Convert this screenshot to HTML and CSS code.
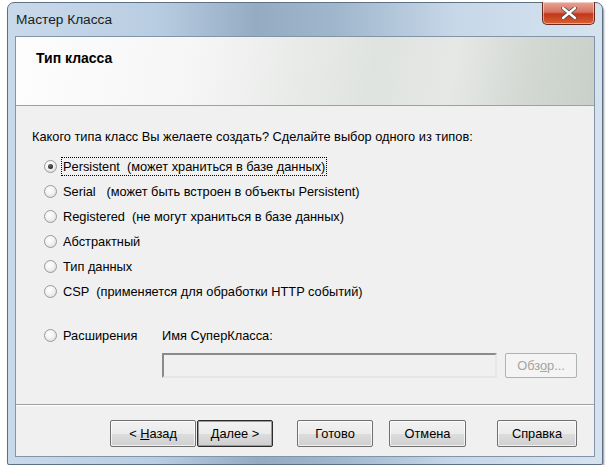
FILE: index.html
```html
<!DOCTYPE html>
<html lang="ru">
<head>
  <meta charset="UTF-8">
  <title>Мастер Класса</title>
  <link rel="stylesheet" href="styles.css">
</head>
<body>
  <div class="window">
    <div class="titlebar">
      <span class="caption">Мастер Класса</span>
      <button class="close" title="Закрыть">
        <svg width="16" height="12" viewBox="0 0 16 12">
          <path d="M2 1 L14 11 M14 1 L2 11" stroke="#4a4a4a" stroke-width="4" stroke-linecap="round"/>
          <path d="M2 1 L14 11 M14 1 L2 11" stroke="#ffffff" stroke-width="2.4" stroke-linecap="round"/>
        </svg>
      </button>
    </div>

    <div class="client">
      <div class="header">
        <h1>Тип класса</h1>
      </div>

      <div class="content">
        <p class="question">Какого типа класс Вы желаете создать? Сделайте выбор одного из типов:</p>

        <div class="options">
          <label class="option"><span class="radio checked"></span><span class="text focused">Persistent  (может храниться в базе данных)</span></label>
          <label class="option"><span class="radio"></span><span class="text">Serial   (может быть встроен в объекты Persistent)</span></label>
          <label class="option"><span class="radio"></span><span class="text">Registered  (не могут храниться в базе данных)</span></label>
          <label class="option"><span class="radio"></span><span class="text">Абстрактный</span></label>
          <label class="option"><span class="radio"></span><span class="text">Тип данных</span></label>
          <label class="option"><span class="radio"></span><span class="text">CSP  (применяется для обработки HTTP событий)</span></label>
        </div>

        <div class="extend">
          <label class="option"><span class="radio"></span><span class="text">Расширения</span></label>
          <span class="super-label">Имя СуперКласса:</span>
        </div>
        <div class="super-row">
          <input class="super-input" type="text" disabled>
          <button class="btn browse" disabled>Обз<u>о</u>р...</button>
        </div>
      </div>

      <div class="footer">
        <button class="btn back">&lt; <u>Н</u>азад</button>
        <button class="btn next default"><u>Д</u>алее &gt;</button>
        <button class="btn finish">Готово</button>
        <button class="btn cancel">Отмена</button>
        <button class="btn help">Справка</button>
      </div>
    </div>
  </div>
</body>
</html>
```

FILE: styles.css
```css
* {
  box-sizing: border-box;
}

body {
  margin: 0;
  background: #ffffff;
  font-family: "Liberation Sans", Arial, sans-serif;
  font-size: 12.8px;
  color: #000;
}

.window {
  width: 596px;
  height: 463px;
  margin: 2px 0 0 7px;
  padding: 0 7px 6px 7px;
  border: 1px solid #5d7086;
  border-radius: 7px 7px 2px 2px;
  background: linear-gradient(to right, #c8d9ea 0%, #b9cde2 25%, #94abc2 42%, #9fb6cc 55%, #c6d7e8 75%, #d6e3ef 100%);
  box-shadow: 1px 2px 2px rgba(0,0,0,0.45);
}

.titlebar {
  height: 33px;
  display: flex;
  justify-content: space-between;
  align-items: flex-start;
}

.caption {
  font-size: 13.7px;
  margin: 9px 0 0 1px;
  color: #1b1b1b;
}

.close {
  width: 53px;
  height: 23px;
  margin-top: -1px;
  padding: 0;
  border: 1px solid #6b2a20;
  border-top: none;
  border-radius: 0 0 5px 5px;
  background: linear-gradient(to bottom, #e8a597 0%, #d7735f 45%, #c2371d 55%, #d9612f 100%);
  box-shadow: inset 0 0 0 1px rgba(255,255,255,0.45);
  display: flex;
  align-items: center;
  justify-content: center;
}

.client {
  height: 421px;
  border: 1px solid #8194a8;
  background: #f0f0f0;
  display: flex;
  flex-direction: column;
}

.header {
  height: 69px;
  flex-shrink: 0;
  border-bottom: 1px solid #a0a0a0;
  background: linear-gradient(100deg, #fdfdfd 0%, #f6f6f6 30%, #e9ebe9 48%, #dfe3df 62%, #e6e8e6 75%, #d3d8d3 88%, #c9cfc9 100%);
}

h1 {
  margin: 13px 0 0 20px;
  font-size: 14px;
  font-weight: bold;
}

.content {
  flex: 1;
  padding: 23px 0 0 16px;
}

.question {
  margin: 0;
  line-height: 16px;
}

.options {
  margin-top: 9px;
}

.option {
  display: flex;
  align-items: center;
  height: 25px;
  padding-left: 12px;
}

.radio {
  position: relative;
  width: 13px;
  height: 13px;
  border: 1px solid #9a9a9a;
  border-radius: 50%;
  background: radial-gradient(circle at 40% 35%, #ffffff 0%, #f4f4f4 40%, #d6d6d6 100%);
  margin-right: 4px;
  flex-shrink: 0;
}

.radio.checked::after {
  content: "";
  position: absolute;
  left: 3px;
  top: 3px;
  width: 5px;
  height: 5px;
  border-radius: 50%;
  background: radial-gradient(circle at 40% 35%, #6a6a6a, #0d0d0d);
}

.text {
  white-space: pre;
  padding: 1px 1px;
  border: 1px dotted transparent;
  line-height: 15px;
}

.text.focused {
  border-color: #000;
}

.extend {
  display: flex;
  align-items: center;
  margin-top: 19px;
}

.extend .option {
  width: 130px;
}

.super-row {
  display: flex;
  gap: 8px;
  margin: 5px 0 0 130px;
}

.super-input {
  width: 335px;
  height: 25px;
  padding: 0;
  border: 2px solid;
  border-color: #8a8a8a #e6e6e6 #e6e6e6 #8a8a8a;
  background: #f0f0f0;
}

.btn {
  height: 27px;
  font-family: "Liberation Sans", Arial, sans-serif;
  font-size: 12.8px;
  color: #000;
  border: 1px solid #707070;
  border-radius: 2px;
  background: linear-gradient(to bottom, #f2f2f2 0%, #ebebeb 50%, #dddddd 51%, #cfcfcf 100%);
  box-shadow: inset 0 0 0 1px rgba(255,255,255,0.7);
  padding: 0;
}

.btn.browse {
  width: 72px;
  height: 25px;
  color: #a3a3a3;
  border-color: #adb2b5;
  background: #f4f4f4;
  box-shadow: none;
}

.footer {
  height: 52px;
  flex-shrink: 0;
  border-top: 1px solid #a0a0a0;
  box-shadow: inset 0 1px 0 #ffffff;
  display: flex;
  align-items: flex-start;
  padding: 15px 0 0 94px;
}

.back { width: 86px; }
.next { width: 76px; margin-left: 1px; }
.finish { width: 76px; margin-left: 24px; }
.cancel { width: 77px; margin-left: 16px; }
.help { width: 80px; margin-left: 31px; }

.btn.default {
  border-color: #2c2c2c;
  box-shadow: inset 0 0 0 1px #9a9a9a;
}
```
